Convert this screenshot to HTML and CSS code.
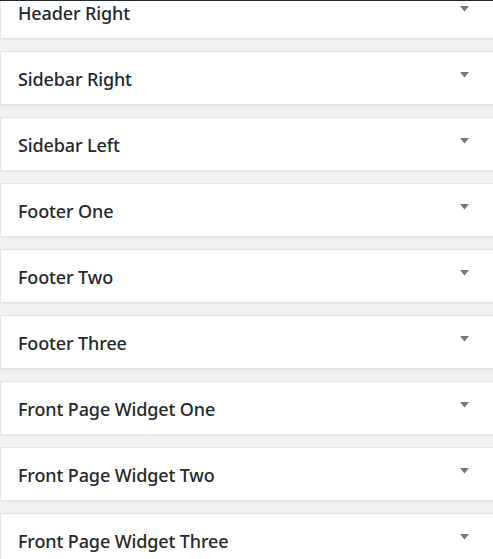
FILE: index.html
```html
<!DOCTYPE html>
<html>
<head>
<meta charset="utf-8">
<link rel="stylesheet" href="styles.css">
</head>
<body>
<div class="topline"></div>
<div class="sidebars">
  <div class="sidebar"><h2 class="name">Header Right</h2><span class="toggle"><svg width="9" height="6" viewBox="0 0 9 6"><polygon points="0,0 9,0 4.5,5.5" fill="#72777c"/></svg></span></div>
  <div class="sidebar"><h2 class="name">Sidebar Right</h2><span class="toggle"><svg width="9" height="6" viewBox="0 0 9 6"><polygon points="0,0 9,0 4.5,5.5" fill="#72777c"/></svg></span></div>
  <div class="sidebar"><h2 class="name">Sidebar Left</h2><span class="toggle"><svg width="9" height="6" viewBox="0 0 9 6"><polygon points="0,0 9,0 4.5,5.5" fill="#72777c"/></svg></span></div>
  <div class="sidebar"><h2 class="name">Footer One</h2><span class="toggle"><svg width="9" height="6" viewBox="0 0 9 6"><polygon points="0,0 9,0 4.5,5.5" fill="#72777c"/></svg></span></div>
  <div class="sidebar"><h2 class="name">Footer Two</h2><span class="toggle"><svg width="9" height="6" viewBox="0 0 9 6"><polygon points="0,0 9,0 4.5,5.5" fill="#72777c"/></svg></span></div>
  <div class="sidebar"><h2 class="name">Footer Three</h2><span class="toggle"><svg width="9" height="6" viewBox="0 0 9 6"><polygon points="0,0 9,0 4.5,5.5" fill="#72777c"/></svg></span></div>
  <div class="sidebar"><h2 class="name">Front Page Widget One</h2><span class="toggle"><svg width="9" height="6" viewBox="0 0 9 6"><polygon points="0,0 9,0 4.5,5.5" fill="#72777c"/></svg></span></div>
  <div class="sidebar"><h2 class="name">Front Page Widget Two</h2><span class="toggle"><svg width="9" height="6" viewBox="0 0 9 6"><polygon points="0,0 9,0 4.5,5.5" fill="#72777c"/></svg></span></div>
  <div class="sidebar"><h2 class="name">Front Page Widget Three</h2><span class="toggle"><svg width="9" height="6" viewBox="0 0 9 6"><polygon points="0,0 9,0 4.5,5.5" fill="#72777c"/></svg></span></div>
</div>
</body>
</html>
```

FILE: styles.css
```css
html, body {
  margin: 0;
  padding: 0;
  background: #f1f1f1;
  overflow: hidden;
}
body {
  font-family: "Noto Sans", "Open Sans", sans-serif;
  color: #23282d;
}
.topline {
  position: fixed;
  top: 0;
  left: 0;
  right: 0;
  height: 1px;
  background: #23282d;
  z-index: 2;
}
.sidebars {
  display: flex;
  flex-direction: column;
  gap: 12px;
  margin-top: -15px;
}
.sidebar {
  display: flex;
  align-items: center;
  height: 52px;
  background: #fff;
  border: 1px solid #e5e5e5;
  border-right: none;
  box-shadow: 0 1px 1px rgba(0,0,0,0.04);
}
.name {
  flex: 1;
  margin: 0;
  padding: 2px 0 0 17px;
  font-size: 18px;
  font-weight: 500;
  line-height: 24px;
  letter-spacing: -0.13px;
}
.toggle {
  align-self: flex-start;
  margin-top: 20px;
  margin-right: 24px;
  display: flex;
}
```
